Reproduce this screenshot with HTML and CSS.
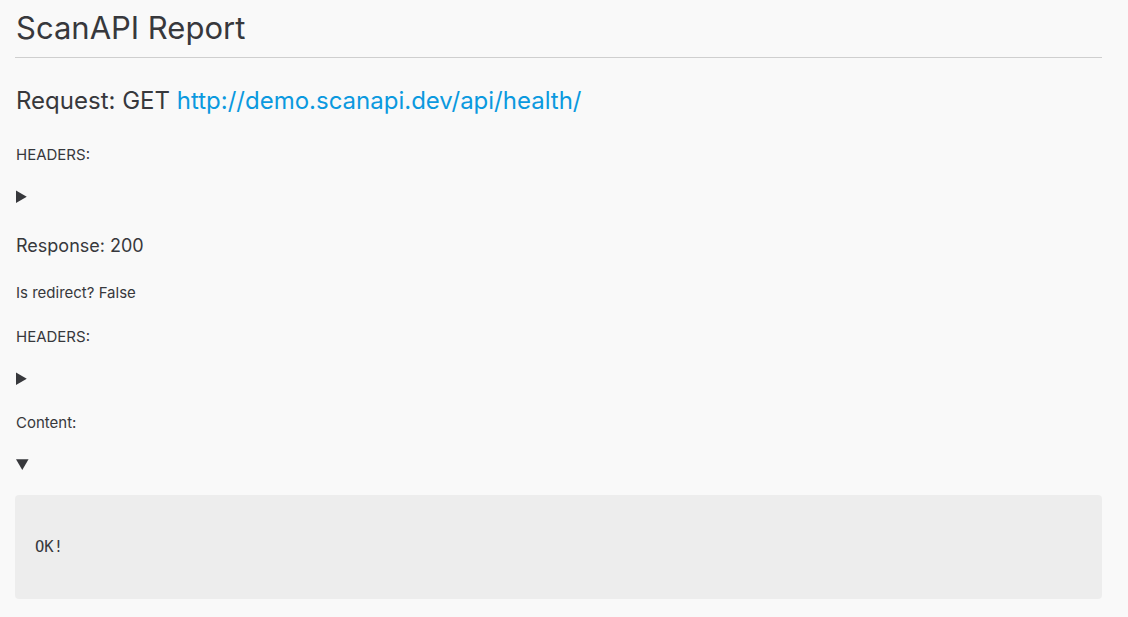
FILE: index.html
```html
<!DOCTYPE html>
<html lang="en">
<head>
<meta charset="utf-8">
<title>ScanAPI Report</title>
<link rel="stylesheet" href="styles.css">
</head>
<body>
<main class="report">
  <h1 class="title">ScanAPI Report</h1>
  <section class="endpoint">
    <h2 class="request">Request: GET <a class="url" href="#">http://demo.scanapi.dev/api/health/</a></h2>
    <p class="label">HEADERS:</p>
    <details class="toggle"><summary></summary></details>
    <h3 class="response">Response: 200</h3>
    <p class="label">Is redirect? False</p>
    <p class="label">HEADERS:</p>
    <details class="toggle"><summary></summary></details>
    <p class="label">Content:</p>
    <details class="toggle" open><summary></summary>
      <pre class="content">OK!</pre>
    </details>
  </section>
</main>
</body>
</html>
```

FILE: styles.css
```css
html, body {
  margin: 0;
  padding: 0;
  background: #f9f9f9;
}
body {
  font-family: Inter, "Noto Sans", "Liberation Sans", sans-serif;
  color: #37383c;
}
.report {
  display: flex;
  flex-direction: column;
  padding: 0 26px 0 15px;
}
.title {
  margin: 8px 0 0;
  padding: 0 0 9px 1px;
  font-size: 31px;
  font-weight: 400;
  line-height: 40px;
  border-bottom: 1px solid #cfcfcf;
}
.endpoint {
  display: flex;
  flex-direction: column;
  padding-left: 1px;
}
.request {
  margin: 28px 0 0;
  font-size: 24px;
  font-weight: 400;
  line-height: 30px;
}
.url {
  color: #0b99df;
  text-decoration: none;
}
.label {
  margin: 22px 0 0;
  font-size: 15px;
  line-height: 22px;
}
.request + .label {
  margin-top: 28px;
}
.toggle {
  margin-top: 20px;
}
.toggle summary {
  font-size: 19px;
  line-height: 22px;
  cursor: pointer;
}
.response {
  margin: 25px 0 0;
  font-size: 18px;
  font-weight: 400;
  line-height: 26px;
}
.response + .label {
  margin-top: 23px;
}
.content {
  margin: 19px 0 0 -1px;
  padding: 41px 20px;
  background: #ededed;
  border-radius: 4px;
  font-family: "DejaVu Sans Mono", "Liberation Mono", monospace;
  font-size: 15.5px;
  line-height: 22px;
  color: #37383c;
}
```
